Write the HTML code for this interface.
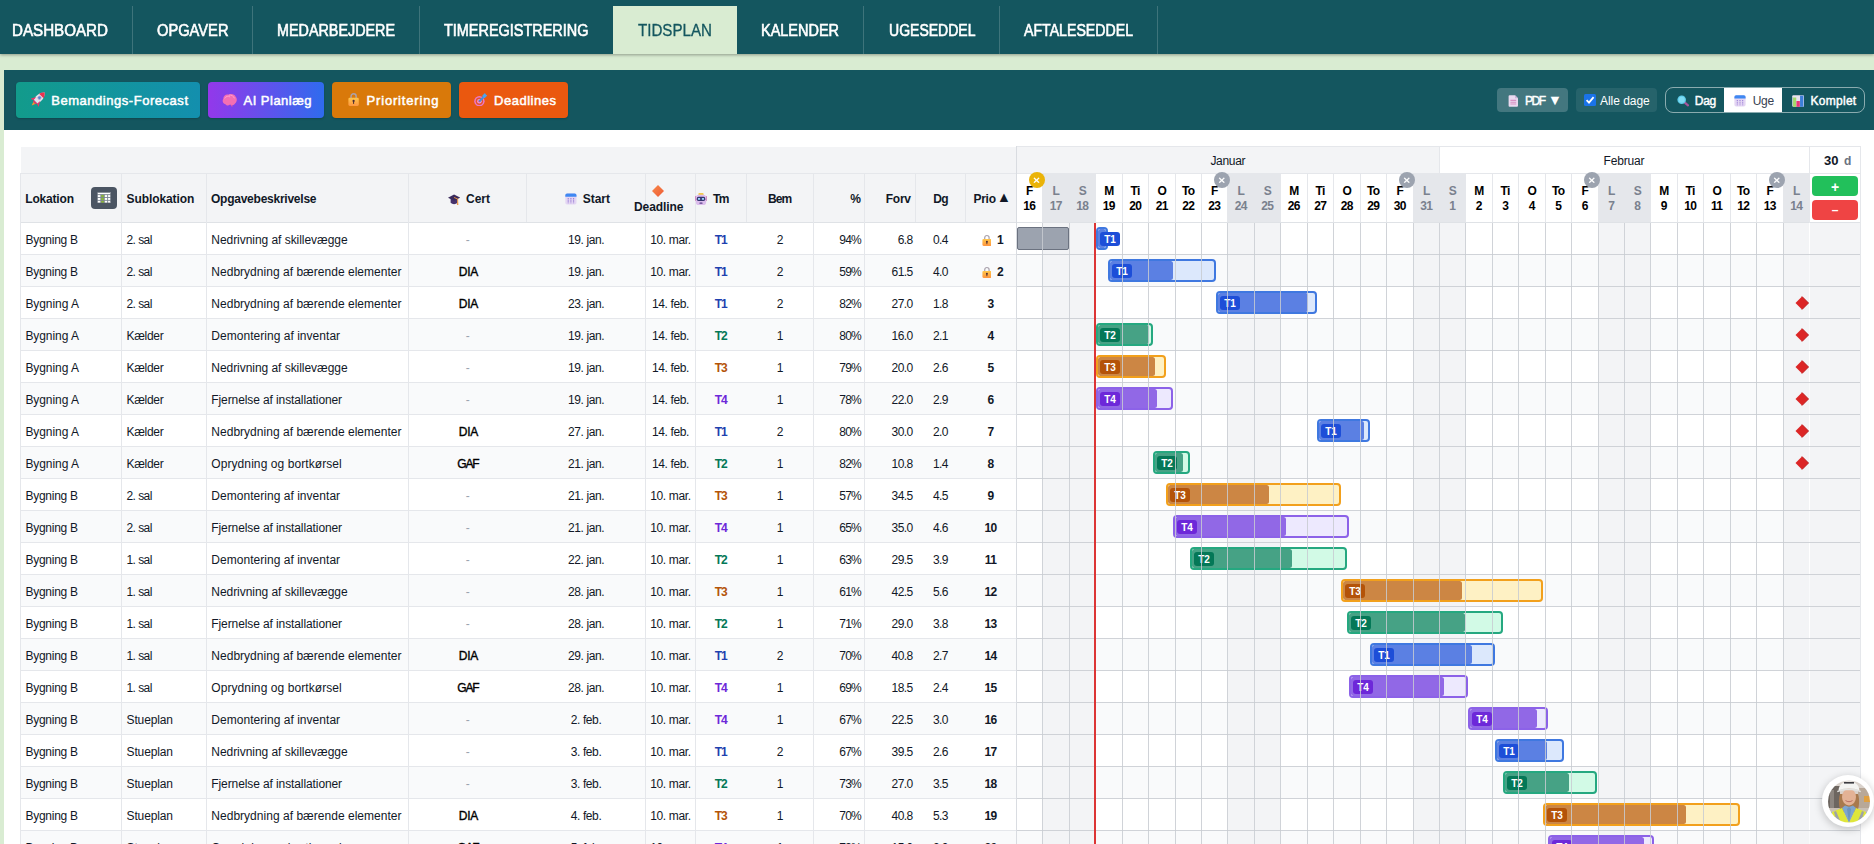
<!DOCTYPE html>
<html lang="da"><head><meta charset="utf-8"><title>Tidsplan</title>
<style>
html,body{margin:0;padding:0}
body{width:1874px;height:844px;overflow:hidden;position:relative;background:#fff;font-family:"Liberation Sans", sans-serif;color:#111827}
#p{position:absolute;left:0;top:0;width:1874px;height:844px;overflow:hidden}
#p div,#p svg,#p span.t{position:absolute}
#p div{box-sizing:border-box}
span.t{white-space:nowrap}
</style></head>
<body><div id="p">
<div style="left:0px;top:0px;width:1874px;height:844px;background:#fff;"></div>
<div style="left:0px;top:54px;width:1874px;height:790px;background:#d9ecd2;"></div>
<div style="left:4px;top:130px;width:1870px;height:714px;background:#fff;"></div>
<div style="left:0px;top:0px;width:1874px;height:54px;background:#14565f;box-shadow:0 1px 3px rgba(0,0,0,.35);z-index:3"></div>
<div style="left:613px;top:6px;width:124px;height:48px;background:#d9ecd2;z-index:4"></div>
<div style="left:132px;top:6px;width:1px;height:48px;background:rgba(255,255,255,.18);z-index:4"></div>
<div style="left:252px;top:6px;width:1px;height:48px;background:rgba(255,255,255,.18);z-index:4"></div>
<div style="left:419px;top:6px;width:1px;height:48px;background:rgba(255,255,255,.18);z-index:4"></div>
<div style="left:863px;top:6px;width:1px;height:48px;background:rgba(255,255,255,.18);z-index:4"></div>
<div style="left:999px;top:6px;width:1px;height:48px;background:rgba(255,255,255,.18);z-index:4"></div>
<div style="left:1157px;top:6px;width:1px;height:48px;background:rgba(255,255,255,.18);z-index:4"></div>
<div style="left:4px;top:70px;width:1870px;height:60px;background:#14565f;"></div>
<div style="left:16px;top:82px;width:184px;height:36px;background:linear-gradient(90deg,#129b8b,#138fae);border-radius:4px;box-shadow:0 1px 2px rgba(0,0,0,.2)"></div>
<div style="left:208px;top:82px;width:116px;height:36px;background:linear-gradient(90deg,#9338ea,#2f6bee);border-radius:4px;box-shadow:0 1px 2px rgba(0,0,0,.2)"></div>
<div style="left:332px;top:82px;width:119px;height:36px;background:#d9790a;border-radius:4px;box-shadow:0 1px 2px rgba(0,0,0,.2)"></div>
<div style="left:459px;top:82px;width:109px;height:36px;background:#ea580f;border-radius:4px;box-shadow:0 1px 2px rgba(0,0,0,.2)"></div>
<div style="left:1497px;top:88px;width:71px;height:24px;background:rgba(255,255,255,.2);border-radius:4px"></div>
<div style="left:1576px;top:88px;width:81px;height:24px;background:rgba(255,255,255,.08);border-radius:4px"></div>
<div style="left:1584px;top:94px;width:12px;height:12px;background:#1a73e8;border-radius:1.5px"><svg width="12" height="12" viewBox="0 0 12 12" style="left:0;top:0"><path d="M2.6 6.2 5 8.6 9.6 3.2" fill="none" stroke="#fff" stroke-width="1.8"/></svg></div>
<div style="left:1665px;top:87px;width:200px;height:26px;background:transparent;border:1px solid rgba(255,255,255,.5);border-radius:8px;overflow:hidden"><div style="left:58px;top:0;width:58px;height:24px;background:#fff"></div></div>
<div style="left:21px;top:147px;width:996px;height:76px;background:#f3f4f6;"></div>
<div style="left:1016px;top:146px;width:423px;height:27px;background:#f3f4f6;"></div>
<div style="left:1439px;top:146px;width:422px;height:27px;background:#fff;"></div>
<div style="left:1016px;top:173px;width:794px;height:50px;background:#fff;"></div>
<div style="left:21px;top:255px;width:1840px;height:31px;background:#f9fafb;"></div>
<div style="left:21px;top:319px;width:1840px;height:31px;background:#f9fafb;"></div>
<div style="left:21px;top:383px;width:1840px;height:31px;background:#f9fafb;"></div>
<div style="left:21px;top:447px;width:1840px;height:31px;background:#f9fafb;"></div>
<div style="left:21px;top:511px;width:1840px;height:31px;background:#f9fafb;"></div>
<div style="left:21px;top:575px;width:1840px;height:31px;background:#f9fafb;"></div>
<div style="left:21px;top:639px;width:1840px;height:31px;background:#f9fafb;"></div>
<div style="left:21px;top:703px;width:1840px;height:31px;background:#f9fafb;"></div>
<div style="left:21px;top:767px;width:1840px;height:31px;background:#f9fafb;"></div>
<div style="left:21px;top:831px;width:1840px;height:31px;background:#f9fafb;"></div>
<div style="left:1043px;top:174px;width:27px;height:48px;background:#e5e7eb;"></div>
<div style="left:1043px;top:223px;width:26px;height:622px;background:#f3f4f6;"></div>
<div style="left:1070px;top:174px;width:26px;height:48px;background:#e5e7eb;"></div>
<div style="left:1070px;top:223px;width:25px;height:622px;background:#f3f4f6;"></div>
<div style="left:1228px;top:174px;width:27px;height:48px;background:#e5e7eb;"></div>
<div style="left:1228px;top:223px;width:26px;height:622px;background:#f3f4f6;"></div>
<div style="left:1255px;top:174px;width:26px;height:48px;background:#e5e7eb;"></div>
<div style="left:1255px;top:223px;width:25px;height:622px;background:#f3f4f6;"></div>
<div style="left:1414px;top:174px;width:26px;height:48px;background:#e5e7eb;"></div>
<div style="left:1414px;top:223px;width:25px;height:622px;background:#f3f4f6;"></div>
<div style="left:1440px;top:174px;width:26px;height:48px;background:#e5e7eb;"></div>
<div style="left:1440px;top:223px;width:25px;height:622px;background:#f3f4f6;"></div>
<div style="left:1599px;top:174px;width:26px;height:48px;background:#e5e7eb;"></div>
<div style="left:1599px;top:223px;width:25px;height:622px;background:#f3f4f6;"></div>
<div style="left:1625px;top:174px;width:26px;height:48px;background:#e5e7eb;"></div>
<div style="left:1625px;top:223px;width:25px;height:622px;background:#f3f4f6;"></div>
<div style="left:1784px;top:174px;width:26px;height:48px;background:#e5e7eb;"></div>
<div style="left:1784px;top:223px;width:25px;height:622px;background:#f3f4f6;"></div>
<div style="left:1810px;top:223px;width:50px;height:622px;background:#f3f4f6;"></div>
<div style="left:1016px;top:146px;width:845px;height:1px;background:#e5e7eb;"></div>
<div style="left:20px;top:173px;width:997px;height:1px;background:#e5e7eb;"></div>
<div style="left:1016px;top:173px;width:845px;height:1px;background:#e5e7eb;"></div>
<div style="left:20px;top:222px;width:1841px;height:1px;background:#dfe2e6;"></div>
<div style="left:20px;top:173px;width:1px;height:673px;background:#e5e7eb;"></div>
<div style="left:1860px;top:146px;width:1px;height:700px;background:#e5e7eb;"></div>
<div style="left:20px;top:254px;width:997px;height:1px;background:#e5e7eb;"></div>
<div style="left:20px;top:286px;width:997px;height:1px;background:#e5e7eb;"></div>
<div style="left:20px;top:318px;width:997px;height:1px;background:#e5e7eb;"></div>
<div style="left:20px;top:350px;width:997px;height:1px;background:#e5e7eb;"></div>
<div style="left:20px;top:382px;width:997px;height:1px;background:#e5e7eb;"></div>
<div style="left:20px;top:414px;width:997px;height:1px;background:#e5e7eb;"></div>
<div style="left:20px;top:446px;width:997px;height:1px;background:#e5e7eb;"></div>
<div style="left:20px;top:478px;width:997px;height:1px;background:#e5e7eb;"></div>
<div style="left:20px;top:510px;width:997px;height:1px;background:#e5e7eb;"></div>
<div style="left:20px;top:542px;width:997px;height:1px;background:#e5e7eb;"></div>
<div style="left:20px;top:574px;width:997px;height:1px;background:#e5e7eb;"></div>
<div style="left:20px;top:606px;width:997px;height:1px;background:#e5e7eb;"></div>
<div style="left:20px;top:638px;width:997px;height:1px;background:#e5e7eb;"></div>
<div style="left:20px;top:670px;width:997px;height:1px;background:#e5e7eb;"></div>
<div style="left:20px;top:702px;width:997px;height:1px;background:#e5e7eb;"></div>
<div style="left:20px;top:734px;width:997px;height:1px;background:#e5e7eb;"></div>
<div style="left:20px;top:766px;width:997px;height:1px;background:#e5e7eb;"></div>
<div style="left:20px;top:798px;width:997px;height:1px;background:#e5e7eb;"></div>
<div style="left:20px;top:830px;width:997px;height:1px;background:#e5e7eb;"></div>
<div style="left:20px;top:862px;width:997px;height:1px;background:#e5e7eb;"></div>
<div style="left:121px;top:174px;width:1px;height:672px;background:#e5e7eb;"></div>
<div style="left:206px;top:174px;width:1px;height:672px;background:#e5e7eb;"></div>
<div style="left:408px;top:174px;width:1px;height:672px;background:#e5e7eb;"></div>
<div style="left:526px;top:174px;width:1px;height:48px;background:#e5e7eb;"></div>
<div style="left:645px;top:174px;width:1px;height:672px;background:#e5e7eb;"></div>
<div style="left:695px;top:174px;width:1px;height:672px;background:#e5e7eb;"></div>
<div style="left:746px;top:174px;width:1px;height:48px;background:#e5e7eb;"></div>
<div style="left:813px;top:174px;width:1px;height:672px;background:#e5e7eb;"></div>
<div style="left:864px;top:174px;width:1px;height:672px;background:#e5e7eb;"></div>
<div style="left:915px;top:174px;width:1px;height:48px;background:#e5e7eb;"></div>
<div style="left:965px;top:174px;width:1px;height:48px;background:#e5e7eb;"></div>
<div style="left:1016px;top:146px;width:1px;height:700px;background:#d9dce1;"></div>
<div style="left:1439px;top:146px;width:1px;height:28px;background:#e5e7eb;"></div>
<div style="left:1809px;top:146px;width:1px;height:77px;background:#e5e7eb;"></div>
<div style="left:91px;top:187px;width:26px;height:22px;background:#4b5563;border-radius:4px"></div>
<div style="left:1017px;top:227px;width:52px;height:23px;background:#9ca3af;border:1px solid #6b7280;border-radius:2px"></div>
<div style="left:1096px;top:227px;width:12px;height:23px;background:#dce8fc;border:2px solid #3f78e0;border-radius:4px;overflow:hidden"><div style="left:0;top:0;width:8px;height:19px;background:#5b80e3;border-radius:2.5px"></div></div>
<div style="left:1100px;top:232px;width:20px;height:14px;background:#1d4ed8;border-radius:3px"></div>
<div style="left:1108px;top:259px;width:108px;height:23px;background:#dce8fc;border:2px solid #3f78e0;border-radius:4px;overflow:hidden"><div style="left:0;top:0;width:63px;height:19px;background:#5b80e3;border-radius:2.5px"></div></div>
<div style="left:1112px;top:264px;width:20px;height:14px;background:#1d4ed8;border-radius:3px"></div>
<div style="left:1216px;top:291px;width:101px;height:23px;background:#dce8fc;border:2px solid #3f78e0;border-radius:4px;overflow:hidden"><div style="left:0;top:0;width:90px;height:19px;background:#5b80e3;border-radius:2.5px"></div></div>
<div style="left:1220px;top:296px;width:20px;height:14px;background:#1d4ed8;border-radius:3px"></div>
<div style="left:1096px;top:323px;width:57px;height:23px;background:#d2fae6;border:2px solid #25a880;border-radius:4px;overflow:hidden"><div style="left:0;top:0;width:51px;height:19px;background:#46a285;border-radius:2.5px"></div></div>
<div style="left:1100px;top:328px;width:20px;height:14px;background:#047857;border-radius:3px"></div>
<div style="left:1096px;top:355px;width:70px;height:23px;background:#fef1c4;border:2px solid #f2a01c;border-radius:4px;overflow:hidden"><div style="left:0;top:0;width:57px;height:19px;background:#cc8644;border-radius:2.5px"></div></div>
<div style="left:1100px;top:360px;width:20px;height:14px;background:#b45309;border-radius:3px"></div>
<div style="left:1096px;top:387px;width:77px;height:23px;background:#ede9fe;border:2px solid #8c62e8;border-radius:4px;overflow:hidden"><div style="left:0;top:0;width:59px;height:19px;background:#9168e6;border-radius:2.5px"></div></div>
<div style="left:1100px;top:392px;width:20px;height:14px;background:#6d28d9;border-radius:3px"></div>
<div style="left:1317px;top:419px;width:53px;height:23px;background:#dce8fc;border:2px solid #3f78e0;border-radius:4px;overflow:hidden"><div style="left:0;top:0;width:45px;height:19px;background:#5b80e3;border-radius:2.5px"></div></div>
<div style="left:1321px;top:424px;width:20px;height:14px;background:#1d4ed8;border-radius:3px"></div>
<div style="left:1153px;top:451px;width:37px;height:23px;background:#d2fae6;border:2px solid #25a880;border-radius:4px;overflow:hidden"><div style="left:0;top:0;width:28px;height:19px;background:#46a285;border-radius:2.5px"></div></div>
<div style="left:1157px;top:456px;width:20px;height:14px;background:#047857;border-radius:3px"></div>
<div style="left:1166px;top:483px;width:175px;height:23px;background:#fef1c4;border:2px solid #f2a01c;border-radius:4px;overflow:hidden"><div style="left:0;top:0;width:101px;height:19px;background:#cc8644;border-radius:2.5px"></div></div>
<div style="left:1170px;top:488px;width:20px;height:14px;background:#b45309;border-radius:3px"></div>
<div style="left:1173px;top:515px;width:176px;height:23px;background:#ede9fe;border:2px solid #8c62e8;border-radius:4px;overflow:hidden"><div style="left:0;top:0;width:110.5px;height:19px;background:#9168e6;border-radius:2.5px"></div></div>
<div style="left:1177px;top:520px;width:20px;height:14px;background:#6d28d9;border-radius:3px"></div>
<div style="left:1190px;top:547px;width:157px;height:23px;background:#d2fae6;border:2px solid #25a880;border-radius:4px;overflow:hidden"><div style="left:0;top:0;width:100px;height:19px;background:#46a285;border-radius:2.5px"></div></div>
<div style="left:1194px;top:552px;width:20px;height:14px;background:#047857;border-radius:3px"></div>
<div style="left:1341px;top:579px;width:202px;height:23px;background:#fef1c4;border:2px solid #f2a01c;border-radius:4px;overflow:hidden"><div style="left:0;top:0;width:119px;height:19px;background:#cc8644;border-radius:2.5px"></div></div>
<div style="left:1345px;top:584px;width:20px;height:14px;background:#b45309;border-radius:3px"></div>
<div style="left:1347px;top:611px;width:156px;height:23px;background:#d2fae6;border:2px solid #25a880;border-radius:4px;overflow:hidden"><div style="left:0;top:0;width:116px;height:19px;background:#46a285;border-radius:2.5px"></div></div>
<div style="left:1351px;top:616px;width:20px;height:14px;background:#047857;border-radius:3px"></div>
<div style="left:1370px;top:643px;width:125px;height:23px;background:#dce8fc;border:2px solid #3f78e0;border-radius:4px;overflow:hidden"><div style="left:0;top:0;width:99.5px;height:19px;background:#5b80e3;border-radius:2.5px"></div></div>
<div style="left:1374px;top:648px;width:20px;height:14px;background:#1d4ed8;border-radius:3px"></div>
<div style="left:1349px;top:675px;width:119px;height:23px;background:#ede9fe;border:2px solid #8c62e8;border-radius:4px;overflow:hidden"><div style="left:0;top:0;width:92.5px;height:19px;background:#9168e6;border-radius:2.5px"></div></div>
<div style="left:1353px;top:680px;width:20px;height:14px;background:#6d28d9;border-radius:3px"></div>
<div style="left:1468px;top:707px;width:80px;height:23px;background:#ede9fe;border:2px solid #8c62e8;border-radius:4px;overflow:hidden"><div style="left:0;top:0;width:66.5px;height:19px;background:#9168e6;border-radius:2.5px"></div></div>
<div style="left:1472px;top:712px;width:20px;height:14px;background:#6d28d9;border-radius:3px"></div>
<div style="left:1495px;top:739px;width:69px;height:23px;background:#dce8fc;border:2px solid #3f78e0;border-radius:4px;overflow:hidden"><div style="left:0;top:0;width:49.5px;height:19px;background:#5b80e3;border-radius:2.5px"></div></div>
<div style="left:1499px;top:744px;width:20px;height:14px;background:#1d4ed8;border-radius:3px"></div>
<div style="left:1503px;top:771px;width:94px;height:23px;background:#d2fae6;border:2px solid #25a880;border-radius:4px;overflow:hidden"><div style="left:0;top:0;width:64px;height:19px;background:#46a285;border-radius:2.5px"></div></div>
<div style="left:1507px;top:776px;width:20px;height:14px;background:#047857;border-radius:3px"></div>
<div style="left:1543px;top:803px;width:197px;height:23px;background:#fef1c4;border:2px solid #f2a01c;border-radius:4px;overflow:hidden"><div style="left:0;top:0;width:141px;height:19px;background:#cc8644;border-radius:2.5px"></div></div>
<div style="left:1547px;top:808px;width:20px;height:14px;background:#b45309;border-radius:3px"></div>
<div style="left:1548px;top:835px;width:106px;height:23px;background:#ede9fe;border:2px solid #8c62e8;border-radius:4px;overflow:hidden"><div style="left:0;top:0;width:94px;height:19px;background:#9168e6;border-radius:2.5px"></div></div>
<div style="left:1552px;top:840px;width:20px;height:14px;background:#6d28d9;border-radius:3px"></div>
<svg width="14" height="14" viewBox="-7 -7 14 14" style="left:1795px;top:295.5px"><path d="M0-6.5 6.5 0 0 6.5-6.5 0Z" fill="#dc2626"/><path d="M0 6.5 6.5 0 0-6.5" fill="none" stroke="#b91c1c" stroke-width="1"/></svg>
<svg width="14" height="14" viewBox="-7 -7 14 14" style="left:1795px;top:327.5px"><path d="M0-6.5 6.5 0 0 6.5-6.5 0Z" fill="#dc2626"/><path d="M0 6.5 6.5 0 0-6.5" fill="none" stroke="#b91c1c" stroke-width="1"/></svg>
<svg width="14" height="14" viewBox="-7 -7 14 14" style="left:1795px;top:359.5px"><path d="M0-6.5 6.5 0 0 6.5-6.5 0Z" fill="#dc2626"/><path d="M0 6.5 6.5 0 0-6.5" fill="none" stroke="#b91c1c" stroke-width="1"/></svg>
<svg width="14" height="14" viewBox="-7 -7 14 14" style="left:1795px;top:391.5px"><path d="M0-6.5 6.5 0 0 6.5-6.5 0Z" fill="#dc2626"/><path d="M0 6.5 6.5 0 0-6.5" fill="none" stroke="#b91c1c" stroke-width="1"/></svg>
<svg width="14" height="14" viewBox="-7 -7 14 14" style="left:1795px;top:423.5px"><path d="M0-6.5 6.5 0 0 6.5-6.5 0Z" fill="#dc2626"/><path d="M0 6.5 6.5 0 0-6.5" fill="none" stroke="#b91c1c" stroke-width="1"/></svg>
<svg width="14" height="14" viewBox="-7 -7 14 14" style="left:1795px;top:455.5px"><path d="M0-6.5 6.5 0 0 6.5-6.5 0Z" fill="#dc2626"/><path d="M0 6.5 6.5 0 0-6.5" fill="none" stroke="#b91c1c" stroke-width="1"/></svg>
<svg width="14" height="14.6" viewBox="0 0 14 14.6" style="left:30.6px;top:92px"><g transform="rotate(45 7 7.3)"><path d="M7 -2.200C10.800 1.200 11 6.500 9.800 10.800H4.200C3 6.500 3.200 1.200 7-2.200Z" fill="#e6e1ee"/><path d="M7-2.200C8.700-.6 9.700 1 10.200 2.600H3.800C4.300 1 5.300-.6 7-2.200Z" fill="#e8334f"/><path d="M4.200 7 1.200 12.300 4.500 11.200ZM9.800 7 12.800 12.300 9.500 11.200Z" fill="#ea3568"/><path d="M4.600 10.800h4.800l-.7 1.800H5.300Z" fill="#ea3568"/><path d="M5.600 12.600h2.800L7 16.200Z" fill="#f59a2e"/><circle cx="7" cy="5.200" r="1.700" fill="#5b7fd6" stroke="#b9b2c8" stroke-width=".7"/></g></svg>
<svg width="15" height="13.4" viewBox="0 0 14 12.600" style="left:222.4px;top:93.2px"><path d="M3.2 10.6C.8 10.2-.2 7.2 1.2 5.4 1 2.8 3.6.8 6 1.6 8.2.2 12 .9 12.8 3.6c1.6 1.6 1.4 4.8-.6 6.2-.9 1.9-3.4 2.2-4.7 1 -1.300 1.400-3.300 1.200-4.300-.2Z" fill="#f46fb3"/><path d="M2.4 5.2C3.400 3 6 2.400 7.600 3.800M6.200 2C8.600 1.600 11 2.800 11.600 5" fill="none" stroke="#ff9fd0" stroke-width=".9"/><path d="M8.5 11.3l1.200 1.200" stroke="#e85aa0" stroke-width="1"/></svg>
<svg width="11.2" height="14.4" viewBox="0 0 11 14" style="left:347.9px;top:92.3px"><defs><linearGradient id="lk0" x1="0" y1="0" x2="0" y2="1"><stop offset="0" stop-color="#ffc64a"/><stop offset="1" stop-color="#ff9640"/></linearGradient></defs><path d="M3 6.500V4.200a2.500 2.500 0 0 1 5 0V6.500" fill="none" stroke="#aaa2ad" stroke-width="1.400"/><rect x=".4" y="5.600" width="10.200" height="8" rx="1.300" fill="url(#lk0)"/><circle cx="5.500" cy="8.700" r="1.100" fill="#4a2b33"/><rect x="5" y="9" width="1" height="2.600" fill="#4a2b33"/></svg>
<svg width="13.4" height="13.6" viewBox="0 0 13.400 13.600" style="left:474.1px;top:92.6px"><circle cx="5.400" cy="8.200" r="5.200" fill="#e978c8"/><circle cx="5.400" cy="8.200" r="3.700" fill="#e8532a"/><circle cx="5.400" cy="8.200" r="2.300" fill="#f09ad2"/><circle cx="5.400" cy="8.200" r="1" fill="#d0407a"/><path d="M5.400 8.200 10.200 3.400" stroke="#3f8fe0" stroke-width="2"/><path d="M8.400 2.600 11 0 11.800 1.600 13.400 2.400 10.800 5 8.800 4.600Z" fill="#4aa3ee"/></svg>
<svg width="10.6" height="11.7" viewBox="0 0 10.600 11.700" style="left:1507.7px;top:95.2px"><path d="M.6 1.200a1 1 0 0 1 1-1H7l3 3v7.600a1 1 0 0 1-1 1H1.600a1 1 0 0 1-1-1Z" fill="#ead9ef"/><path d="M7 .2v3h3Z" fill="#cdb3d8"/><path d="M2.400 5.400h5.800M2.400 7.200h5.800M2.400 9h5.800" stroke="#d791c3" stroke-width="1.100"/></svg>
<svg width="12" height="11.2" viewBox="0 0 12 11.200" style="left:1676.9px;top:95.4px"><path d="M7.200 7.200 11 10.400" stroke="#a8559c" stroke-width="2.200" stroke-linecap="round"/><circle cx="4.700" cy="4.700" r="4.300" fill="#5fcdea"/><circle cx="4.700" cy="4.700" r="3" fill="#7fdcf4"/></svg>
<svg width="12" height="11.8" viewBox="0 0 12 12" style="left:1734px;top:94.8px"><rect x=".3" y=".3" width="11.400" height="11.400" rx="1.800" fill="#e4d6f3"/><path d="M.3 2.100A1.800 1.800 0 0 1 2.100.3h7.800a1.800 1.800 0 0 1 1.800 1.800V3.600H.3Z" fill="#3f88f2"/><path d="M3.300 5v5.400M6 5v5.400M8.700 5v5.400" stroke="#9f86d8" stroke-width="1.200" stroke-dasharray="1.400 .9"/></svg>
<svg width="12.3" height="12" viewBox="0 0 12.200 12" style="left:1791.9px;top:94.7px"><rect x=".2" y=".2" width="11.800" height="11.600" rx="1" fill="#e9e2ef"/><rect x="1" y="2.500" width="3.200" height="9.300" fill="#a3d96b"/><rect x="4.400" y="6" width="3.400" height="5.800" fill="#e8357a"/><rect x="8" y=".6" width="3.400" height="11.200" fill="#3d7fd9"/></svg>
<svg width="12.1" height="11.1" viewBox="0 0 12 11" style="left:447.9px;top:193.9px"><path d="M2.600 5v3.800c1.800 1.800 5 1.800 6.800 0V5Z" fill="#46326c"/><path d="M6 .4 12 3.600 6 6.800 0 3.600Z" fill="#3a2a5c"/><path d="M6 3.400 9.600 5v3.500" fill="none" stroke="#f0963a" stroke-width=".9"/><path d="M9.100 8.200h1l.2 2.600H8.900Z" fill="#f0963a"/></svg>
<svg width="11.8" height="12" viewBox="0 0 12 12" style="left:564.8px;top:192.5px"><rect x=".3" y=".3" width="11.400" height="11.400" rx="1.800" fill="#e4d6f3"/><path d="M.3 2.100A1.800 1.800 0 0 1 2.100.3h7.800a1.800 1.800 0 0 1 1.800 1.800V3.600H.3Z" fill="#3f88f2"/><path d="M3.300 5v5.400M6 5v5.400M8.700 5v5.400" stroke="#9f86d8" stroke-width="1.200" stroke-dasharray="1.400 .9"/></svg>
<svg width="12" height="12" viewBox="0 0 12 12" style="left:652.2px;top:185px"><defs><linearGradient id="dm" x1="0" y1="0" x2="1" y2="1"><stop offset="0" stop-color="#f7894a"/><stop offset="1" stop-color="#ee5a35"/></linearGradient></defs><path d="M6 0 12 6 6 12 0 6Z" fill="url(#dm)"/></svg>
<svg width="12" height="12.3" viewBox="0 0 12 12.2" style="left:695px;top:192.5px"><rect x="3.400" y="0" width="5.200" height="2.600" rx=".9" fill="#f2c94c"/><rect x="0" y="3" width="1.500" height="5" rx=".7" fill="#c97fb8"/><rect x="10.500" y="3" width="1.500" height="5" rx=".7" fill="#c97fb8"/><rect x=".8" y="1.600" width="10.400" height="10.600" rx="3.200" fill="#dcbdec"/><rect x="1.700" y="3.800" width="8.600" height="4.200" rx="1.800" fill="#34346e"/><rect x="2.900" y="5" width="2.300" height="1.700" rx=".6" fill="#9fdcff"/><rect x="6.800" y="5" width="2.300" height="1.700" rx=".6" fill="#9fdcff"/><rect x="4.400" y="9.500" width="3.200" height="1.100" rx=".4" fill="#5a3f8a"/></svg>
<svg width="14" height="11.4" viewBox="0 0 14 11.400" style="left:97px;top:191.8px"><rect width="14" height="11.400" fill="#fff"/><rect x="4" y="2.600" width="3.200" height="8.800" fill="#8ab833"/><path d="M0 2.600h14M0 5.500h14M0 8.400h14M3.800 2.600v8.800M7.300 2.600v8.800M10.600 2.600v8.800" stroke="#7b8591" stroke-width=".9"/><rect x=".4" y=".4" width="13.200" height="10.600" fill="none" stroke="#6b7480" stroke-width=".8"/></svg>
<svg width="9.8" height="12.3" viewBox="0 0 11 14" style="left:981.6px;top:233.6px"><defs><linearGradient id="lk1" x1="0" y1="0" x2="0" y2="1"><stop offset="0" stop-color="#ffc64a"/><stop offset="1" stop-color="#ff9640"/></linearGradient></defs><path d="M3 6.500V4.200a2.500 2.500 0 0 1 5 0V6.500" fill="none" stroke="#aaa2ad" stroke-width="1.400"/><rect x=".4" y="5.600" width="10.200" height="8" rx="1.300" fill="url(#lk1)"/><circle cx="5.500" cy="8.700" r="1.100" fill="#4a2b33"/><rect x="5" y="9" width="1" height="2.600" fill="#4a2b33"/></svg>
<svg width="9.8" height="12.3" viewBox="0 0 11 14" style="left:981.6px;top:265.6px"><defs><linearGradient id="lk2" x1="0" y1="0" x2="0" y2="1"><stop offset="0" stop-color="#ffc64a"/><stop offset="1" stop-color="#ff9640"/></linearGradient></defs><path d="M3 6.500V4.200a2.500 2.500 0 0 1 5 0V6.500" fill="none" stroke="#aaa2ad" stroke-width="1.400"/><rect x=".4" y="5.600" width="10.200" height="8" rx="1.300" fill="url(#lk2)"/><circle cx="5.500" cy="8.700" r="1.100" fill="#4a2b33"/><rect x="5" y="9" width="1" height="2.600" fill="#4a2b33"/></svg>
<span class="t" style="left:12.00px;top:23px;font-size:16px;line-height:16px;color:#fff;transform:scaleX(0.9471);transform-origin:0 0;z-index:5;-webkit-text-stroke:.6px #fff;">DASHBOARD</span>
<span class="t" style="left:157.00px;top:23px;font-size:16px;line-height:16px;color:#fff;transform:scaleX(0.9172);transform-origin:0 0;z-index:5;-webkit-text-stroke:.6px #fff;">OPGAVER</span>
<span class="t" style="left:277.00px;top:23px;font-size:16px;line-height:16px;color:#fff;transform:scaleX(0.8968);transform-origin:0 0;z-index:5;-webkit-text-stroke:.6px #fff;">MEDARBEJDERE</span>
<span class="t" style="left:444.00px;top:23px;font-size:16px;line-height:16px;color:#fff;transform:scaleX(0.9030);transform-origin:0 0;z-index:5;-webkit-text-stroke:.6px #fff;">TIMEREGISTRERING</span>
<span class="t" style="left:637.50px;top:23px;font-size:16px;line-height:16px;color:#14565f;transform:scaleX(0.9457);transform-origin:0 0;z-index:5;-webkit-text-stroke:.3px #14565f;">TIDSPLAN</span>
<span class="t" style="left:761.00px;top:23px;font-size:16px;line-height:16px;color:#fff;transform:scaleX(0.9043);transform-origin:0 0;z-index:5;-webkit-text-stroke:.6px #fff;">KALENDER</span>
<span class="t" style="left:888.50px;top:23px;font-size:16px;line-height:16px;color:#fff;transform:scaleX(0.8764);transform-origin:0 0;z-index:5;-webkit-text-stroke:.6px #fff;">UGESEDDEL</span>
<span class="t" style="left:1024.00px;top:23px;font-size:16px;line-height:16px;color:#fff;transform:scaleX(0.8840);transform-origin:0 0;z-index:5;-webkit-text-stroke:.6px #fff;">AFTALESEDDEL</span>
<span class="t" style="left:51.25px;top:94px;font-size:13px;line-height:13px;color:#fff;letter-spacing:0.532px;-webkit-text-stroke:.5px #fff;">Bemandings-Forecast</span>
<span class="t" style="left:243.50px;top:94px;font-size:13px;line-height:13px;color:#fff;letter-spacing:0.490px;-webkit-text-stroke:.5px #fff;">AI Planlæg</span>
<span class="t" style="left:366.50px;top:94px;font-size:13px;line-height:13px;color:#fff;letter-spacing:0.831px;-webkit-text-stroke:.5px #fff;">Prioritering</span>
<span class="t" style="left:494.00px;top:94px;font-size:13px;line-height:13px;color:#fff;letter-spacing:0.521px;-webkit-text-stroke:.5px #fff;">Deadlines</span>
<span class="t" style="left:1525.00px;top:95px;font-size:12px;line-height:12px;color:#fff;letter-spacing:-1.400px;-webkit-text-stroke:.45px #fff;">PDF</span>
<span class="t" style="left:1547.80px;top:93px;font-size:14.5px;line-height:14.5px;color:#fff;font-family:"DejaVu Sans",sans-serif;">▼</span>
<span class="t" style="left:1600.00px;top:95px;font-size:12px;line-height:12px;color:#fff;letter-spacing:-0.043px;">Alle dage</span>
<span class="t" style="left:1694.80px;top:95px;font-size:12px;line-height:12px;color:#fff;letter-spacing:-0.308px;-webkit-text-stroke:.45px #fff;">Dag</span>
<span class="t" style="left:1752.70px;top:95px;font-size:12px;line-height:12px;color:#374151;letter-spacing:-0.258px;">Uge</span>
<span class="t" style="left:1810.50px;top:95px;font-size:12px;line-height:12px;color:#fff;letter-spacing:0.278px;-webkit-text-stroke:.45px #fff;">Komplet</span>
<span class="t" style="left:25.30px;top:193px;font-size:12px;line-height:12px;font-weight:700;letter-spacing:-0.186px;">Lokation</span>
<span class="t" style="left:126.60px;top:193px;font-size:12px;line-height:12px;font-weight:700;letter-spacing:-0.097px;">Sublokation</span>
<span class="t" style="left:211.00px;top:193px;font-size:12px;line-height:12px;font-weight:700;letter-spacing:-0.244px;">Opgavebeskrivelse</span>
<span class="t" style="left:466.00px;top:193px;font-size:12px;line-height:12px;font-weight:700;letter-spacing:-0.005px;">Cert</span>
<span class="t" style="left:582.70px;top:193px;font-size:12px;line-height:12px;font-weight:700;letter-spacing:-0.011px;">Start</span>
<span class="t" style="left:634.00px;top:201px;font-size:12px;line-height:12px;font-weight:700;letter-spacing:-0.102px;">Deadline</span>
<span class="t" style="left:713.00px;top:193px;font-size:12px;line-height:12px;font-weight:700;letter-spacing:-1.700px;">Tm</span>
<span class="t" style="left:768.00px;top:193px;font-size:12px;line-height:12px;font-weight:700;letter-spacing:-0.858px;">Bem</span>
<span class="t" style="left:850.30px;top:193px;font-size:12px;line-height:12px;font-weight:700;">%</span>
<span class="t" style="left:885.80px;top:193px;font-size:12px;line-height:12px;font-weight:700;letter-spacing:-0.272px;">Forv</span>
<span class="t" style="left:933.30px;top:193px;font-size:12px;line-height:12px;font-weight:700;letter-spacing:-0.600px;">Dg</span>
<span class="t" style="left:973.50px;top:193px;font-size:12px;line-height:12px;font-weight:700;letter-spacing:-0.281px;">Prio</span>
<span class="t" style="left:996.80px;top:190px;font-size:14.5px;line-height:14.5px;font-family:"DejaVu Sans",sans-serif;">▲</span>
<span class="t" style="left:1210.40px;top:155px;font-size:12px;line-height:12px;letter-spacing:-0.301px;">Januar</span>
<span class="t" style="left:1603.50px;top:155px;font-size:12px;line-height:12px;letter-spacing:-0.172px;">Februar</span>
<span class="t" style="left:1824.00px;top:154px;font-size:13px;line-height:13px;font-weight:700;letter-spacing:0.031px;">30</span>
<span class="t" style="left:1844.00px;top:155px;font-size:12px;line-height:12px;font-weight:700;color:#6b7280;">d</span>
<span class="t" style="left:1026.01px;top:185px;font-size:12px;line-height:12px;font-weight:700;color:#000;">F</span>
<span class="t" style="left:1023.15px;top:200px;font-size:12px;line-height:12px;font-weight:700;color:#000;letter-spacing:-0.668px;">16</span>
<span class="t" style="left:1052.51px;top:185px;font-size:12px;line-height:12px;font-weight:700;color:#7a818e;">L</span>
<span class="t" style="left:1049.65px;top:200px;font-size:12px;line-height:12px;font-weight:700;color:#7a818e;letter-spacing:-0.668px;">17</span>
<span class="t" style="left:1078.69px;top:185px;font-size:12px;line-height:12px;font-weight:700;color:#7a818e;">S</span>
<span class="t" style="left:1076.15px;top:200px;font-size:12px;line-height:12px;font-weight:700;color:#7a818e;letter-spacing:-0.668px;">18</span>
<span class="t" style="left:1104.25px;top:185px;font-size:12px;line-height:12px;font-weight:700;color:#000;">M</span>
<span class="t" style="left:1102.65px;top:200px;font-size:12px;line-height:12px;font-weight:700;color:#000;letter-spacing:-0.668px;">19</span>
<span class="t" style="left:1130.53px;top:185px;font-size:12px;line-height:12px;font-weight:700;color:#000;letter-spacing:-0.523px;">Ti</span>
<span class="t" style="left:1129.15px;top:200px;font-size:12px;line-height:12px;font-weight:700;color:#000;letter-spacing:-0.668px;">20</span>
<span class="t" style="left:1157.56px;top:185px;font-size:12px;line-height:12px;font-weight:700;color:#000;">O</span>
<span class="t" style="left:1155.65px;top:200px;font-size:12px;line-height:12px;font-weight:700;color:#000;letter-spacing:-0.668px;">21</span>
<span class="t" style="left:1181.95px;top:185px;font-size:12px;line-height:12px;font-weight:700;color:#000;letter-spacing:-0.689px;">To</span>
<span class="t" style="left:1182.15px;top:200px;font-size:12px;line-height:12px;font-weight:700;color:#000;letter-spacing:-0.668px;">22</span>
<span class="t" style="left:1211.01px;top:185px;font-size:12px;line-height:12px;font-weight:700;color:#000;">F</span>
<span class="t" style="left:1208.15px;top:200px;font-size:12px;line-height:12px;font-weight:700;color:#000;letter-spacing:-0.668px;">23</span>
<span class="t" style="left:1237.51px;top:185px;font-size:12px;line-height:12px;font-weight:700;color:#7a818e;">L</span>
<span class="t" style="left:1234.65px;top:200px;font-size:12px;line-height:12px;font-weight:700;color:#7a818e;letter-spacing:-0.668px;">24</span>
<span class="t" style="left:1263.69px;top:185px;font-size:12px;line-height:12px;font-weight:700;color:#7a818e;">S</span>
<span class="t" style="left:1261.15px;top:200px;font-size:12px;line-height:12px;font-weight:700;color:#7a818e;letter-spacing:-0.668px;">25</span>
<span class="t" style="left:1289.25px;top:185px;font-size:12px;line-height:12px;font-weight:700;color:#000;">M</span>
<span class="t" style="left:1287.65px;top:200px;font-size:12px;line-height:12px;font-weight:700;color:#000;letter-spacing:-0.668px;">26</span>
<span class="t" style="left:1315.53px;top:185px;font-size:12px;line-height:12px;font-weight:700;color:#000;letter-spacing:-0.523px;">Ti</span>
<span class="t" style="left:1314.15px;top:200px;font-size:12px;line-height:12px;font-weight:700;color:#000;letter-spacing:-0.668px;">27</span>
<span class="t" style="left:1342.56px;top:185px;font-size:12px;line-height:12px;font-weight:700;color:#000;">O</span>
<span class="t" style="left:1340.65px;top:200px;font-size:12px;line-height:12px;font-weight:700;color:#000;letter-spacing:-0.668px;">28</span>
<span class="t" style="left:1366.95px;top:185px;font-size:12px;line-height:12px;font-weight:700;color:#000;letter-spacing:-0.689px;">To</span>
<span class="t" style="left:1367.15px;top:200px;font-size:12px;line-height:12px;font-weight:700;color:#000;letter-spacing:-0.668px;">29</span>
<span class="t" style="left:1396.51px;top:185px;font-size:12px;line-height:12px;font-weight:700;color:#000;">F</span>
<span class="t" style="left:1393.65px;top:200px;font-size:12px;line-height:12px;font-weight:700;color:#000;letter-spacing:-0.668px;">30</span>
<span class="t" style="left:1423.01px;top:185px;font-size:12px;line-height:12px;font-weight:700;color:#7a818e;">L</span>
<span class="t" style="left:1420.15px;top:200px;font-size:12px;line-height:12px;font-weight:700;color:#7a818e;letter-spacing:-0.668px;">31</span>
<span class="t" style="left:1448.69px;top:185px;font-size:12px;line-height:12px;font-weight:700;color:#7a818e;">S</span>
<span class="t" style="left:1449.32px;top:200px;font-size:12px;line-height:12px;font-weight:700;color:#7a818e;">1</span>
<span class="t" style="left:1474.25px;top:185px;font-size:12px;line-height:12px;font-weight:700;color:#000;">M</span>
<span class="t" style="left:1475.82px;top:200px;font-size:12px;line-height:12px;font-weight:700;color:#000;">2</span>
<span class="t" style="left:1500.53px;top:185px;font-size:12px;line-height:12px;font-weight:700;color:#000;letter-spacing:-0.523px;">Ti</span>
<span class="t" style="left:1502.32px;top:200px;font-size:12px;line-height:12px;font-weight:700;color:#000;">3</span>
<span class="t" style="left:1527.56px;top:185px;font-size:12px;line-height:12px;font-weight:700;color:#000;">O</span>
<span class="t" style="left:1528.82px;top:200px;font-size:12px;line-height:12px;font-weight:700;color:#000;">4</span>
<span class="t" style="left:1551.95px;top:185px;font-size:12px;line-height:12px;font-weight:700;color:#000;letter-spacing:-0.689px;">To</span>
<span class="t" style="left:1555.32px;top:200px;font-size:12px;line-height:12px;font-weight:700;color:#000;">5</span>
<span class="t" style="left:1581.51px;top:185px;font-size:12px;line-height:12px;font-weight:700;color:#000;">F</span>
<span class="t" style="left:1581.82px;top:200px;font-size:12px;line-height:12px;font-weight:700;color:#000;">6</span>
<span class="t" style="left:1608.01px;top:185px;font-size:12px;line-height:12px;font-weight:700;color:#7a818e;">L</span>
<span class="t" style="left:1608.32px;top:200px;font-size:12px;line-height:12px;font-weight:700;color:#7a818e;">7</span>
<span class="t" style="left:1633.69px;top:185px;font-size:12px;line-height:12px;font-weight:700;color:#7a818e;">S</span>
<span class="t" style="left:1634.32px;top:200px;font-size:12px;line-height:12px;font-weight:700;color:#7a818e;">8</span>
<span class="t" style="left:1659.25px;top:185px;font-size:12px;line-height:12px;font-weight:700;color:#000;">M</span>
<span class="t" style="left:1660.82px;top:200px;font-size:12px;line-height:12px;font-weight:700;color:#000;">9</span>
<span class="t" style="left:1685.53px;top:185px;font-size:12px;line-height:12px;font-weight:700;color:#000;letter-spacing:-0.523px;">Ti</span>
<span class="t" style="left:1684.15px;top:200px;font-size:12px;line-height:12px;font-weight:700;color:#000;letter-spacing:-0.668px;">10</span>
<span class="t" style="left:1712.56px;top:185px;font-size:12px;line-height:12px;font-weight:700;color:#000;">O</span>
<span class="t" style="left:1710.97px;top:200px;font-size:12px;line-height:12px;font-weight:700;color:#000;letter-spacing:-0.634px;">11</span>
<span class="t" style="left:1736.95px;top:185px;font-size:12px;line-height:12px;font-weight:700;color:#000;letter-spacing:-0.689px;">To</span>
<span class="t" style="left:1737.15px;top:200px;font-size:12px;line-height:12px;font-weight:700;color:#000;letter-spacing:-0.668px;">12</span>
<span class="t" style="left:1766.51px;top:185px;font-size:12px;line-height:12px;font-weight:700;color:#000;">F</span>
<span class="t" style="left:1763.65px;top:200px;font-size:12px;line-height:12px;font-weight:700;color:#000;letter-spacing:-0.668px;">13</span>
<span class="t" style="left:1793.01px;top:185px;font-size:12px;line-height:12px;font-weight:700;color:#7a818e;">L</span>
<span class="t" style="left:1790.15px;top:200px;font-size:12px;line-height:12px;font-weight:700;color:#7a818e;letter-spacing:-0.668px;">14</span>
<span class="t" style="left:25.40px;top:234px;font-size:12px;line-height:12px;letter-spacing:-0.250px;">Bygning B</span>
<span class="t" style="left:126.50px;top:234px;font-size:12px;line-height:12px;letter-spacing:-0.558px;">2. sal</span>
<span class="t" style="left:211.30px;top:234px;font-size:12px;line-height:12px;letter-spacing:-0.046px;">Nedrivning af skillevægge</span>
<span class="t" style="left:465.80px;top:234px;font-size:12px;line-height:12px;color:#9ca3af;">-</span>
<span class="t" style="left:568.09px;top:234px;font-size:12px;line-height:12px;letter-spacing:-0.422px;">19. jan.</span>
<span class="t" style="left:650.20px;top:234px;font-size:12px;line-height:12px;letter-spacing:-0.337px;">10. mar.</span>
<span class="t" style="left:714.70px;top:234px;font-size:12px;line-height:12px;font-weight:700;color:#1e40af;letter-spacing:-1.016px;">T1</span>
<span class="t" style="left:776.82px;top:234px;font-size:12px;line-height:12px;">2</span>
<span class="t" style="left:839.35px;top:234px;font-size:12px;line-height:12px;letter-spacing:-0.841px;">94%</span>
<span class="t" style="left:897.78px;top:234px;font-size:12px;line-height:12px;letter-spacing:-0.584px;">6.8</span>
<span class="t" style="left:932.94px;top:234px;font-size:12px;line-height:12px;letter-spacing:-0.584px;">0.4</span>
<span class="t" style="left:997.12px;top:234px;font-size:12px;line-height:12px;font-weight:700;">1</span>
<span class="t" style="left:25.40px;top:266px;font-size:12px;line-height:12px;letter-spacing:-0.250px;">Bygning B</span>
<span class="t" style="left:126.50px;top:266px;font-size:12px;line-height:12px;letter-spacing:-0.558px;">2. sal</span>
<span class="t" style="left:211.30px;top:266px;font-size:12px;line-height:12px;letter-spacing:0.024px;">Nedbrydning af bærende elementer</span>
<span class="t" style="left:458.80px;top:266px;font-size:12px;line-height:12px;color:#000;letter-spacing:-0.308px;-webkit-text-stroke:.35px #000;">DIA</span>
<span class="t" style="left:568.09px;top:266px;font-size:12px;line-height:12px;letter-spacing:-0.422px;">19. jan.</span>
<span class="t" style="left:650.20px;top:266px;font-size:12px;line-height:12px;letter-spacing:-0.337px;">10. mar.</span>
<span class="t" style="left:714.70px;top:266px;font-size:12px;line-height:12px;font-weight:700;color:#1e40af;letter-spacing:-1.016px;">T1</span>
<span class="t" style="left:776.82px;top:266px;font-size:12px;line-height:12px;">2</span>
<span class="t" style="left:839.35px;top:266px;font-size:12px;line-height:12px;letter-spacing:-0.841px;">59%</span>
<span class="t" style="left:891.58px;top:266px;font-size:12px;line-height:12px;letter-spacing:-0.545px;">61.5</span>
<span class="t" style="left:932.94px;top:266px;font-size:12px;line-height:12px;letter-spacing:-0.584px;">4.0</span>
<span class="t" style="left:997.12px;top:266px;font-size:12px;line-height:12px;font-weight:700;">2</span>
<span class="t" style="left:25.40px;top:298px;font-size:12px;line-height:12px;letter-spacing:-0.068px;">Bygning A</span>
<span class="t" style="left:126.50px;top:298px;font-size:12px;line-height:12px;letter-spacing:-0.558px;">2. sal</span>
<span class="t" style="left:211.30px;top:298px;font-size:12px;line-height:12px;letter-spacing:0.024px;">Nedbrydning af bærende elementer</span>
<span class="t" style="left:458.80px;top:298px;font-size:12px;line-height:12px;color:#000;letter-spacing:-0.308px;-webkit-text-stroke:.35px #000;">DIA</span>
<span class="t" style="left:568.09px;top:298px;font-size:12px;line-height:12px;letter-spacing:-0.422px;">23. jan.</span>
<span class="t" style="left:651.95px;top:298px;font-size:12px;line-height:12px;letter-spacing:-0.362px;">14. feb.</span>
<span class="t" style="left:714.70px;top:298px;font-size:12px;line-height:12px;font-weight:700;color:#1e40af;letter-spacing:-1.016px;">T1</span>
<span class="t" style="left:776.82px;top:298px;font-size:12px;line-height:12px;">2</span>
<span class="t" style="left:839.35px;top:298px;font-size:12px;line-height:12px;letter-spacing:-0.841px;">82%</span>
<span class="t" style="left:891.58px;top:298px;font-size:12px;line-height:12px;letter-spacing:-0.545px;">27.0</span>
<span class="t" style="left:932.94px;top:298px;font-size:12px;line-height:12px;letter-spacing:-0.584px;">1.8</span>
<span class="t" style="left:987.62px;top:298px;font-size:12px;line-height:12px;font-weight:700;">3</span>
<span class="t" style="left:25.40px;top:330px;font-size:12px;line-height:12px;letter-spacing:-0.068px;">Bygning A</span>
<span class="t" style="left:126.50px;top:330px;font-size:12px;line-height:12px;letter-spacing:-0.297px;">Kælder</span>
<span class="t" style="left:211.30px;top:330px;font-size:12px;line-height:12px;letter-spacing:0.033px;">Demontering af inventar</span>
<span class="t" style="left:465.80px;top:330px;font-size:12px;line-height:12px;color:#9ca3af;">-</span>
<span class="t" style="left:568.09px;top:330px;font-size:12px;line-height:12px;letter-spacing:-0.422px;">19. jan.</span>
<span class="t" style="left:651.95px;top:330px;font-size:12px;line-height:12px;letter-spacing:-0.362px;">14. feb.</span>
<span class="t" style="left:714.70px;top:330px;font-size:12px;line-height:12px;font-weight:700;color:#047857;letter-spacing:-1.016px;">T2</span>
<span class="t" style="left:776.82px;top:330px;font-size:12px;line-height:12px;">1</span>
<span class="t" style="left:839.35px;top:330px;font-size:12px;line-height:12px;letter-spacing:-0.841px;">80%</span>
<span class="t" style="left:891.58px;top:330px;font-size:12px;line-height:12px;letter-spacing:-0.545px;">16.0</span>
<span class="t" style="left:932.94px;top:330px;font-size:12px;line-height:12px;letter-spacing:-0.584px;">2.1</span>
<span class="t" style="left:987.62px;top:330px;font-size:12px;line-height:12px;font-weight:700;">4</span>
<span class="t" style="left:25.40px;top:362px;font-size:12px;line-height:12px;letter-spacing:-0.068px;">Bygning A</span>
<span class="t" style="left:126.50px;top:362px;font-size:12px;line-height:12px;letter-spacing:-0.297px;">Kælder</span>
<span class="t" style="left:211.30px;top:362px;font-size:12px;line-height:12px;letter-spacing:-0.046px;">Nedrivning af skillevægge</span>
<span class="t" style="left:465.80px;top:362px;font-size:12px;line-height:12px;color:#9ca3af;">-</span>
<span class="t" style="left:568.09px;top:362px;font-size:12px;line-height:12px;letter-spacing:-0.422px;">19. jan.</span>
<span class="t" style="left:651.95px;top:362px;font-size:12px;line-height:12px;letter-spacing:-0.362px;">14. feb.</span>
<span class="t" style="left:714.70px;top:362px;font-size:12px;line-height:12px;font-weight:700;color:#b45309;letter-spacing:-1.016px;">T3</span>
<span class="t" style="left:776.82px;top:362px;font-size:12px;line-height:12px;">1</span>
<span class="t" style="left:839.35px;top:362px;font-size:12px;line-height:12px;letter-spacing:-0.841px;">79%</span>
<span class="t" style="left:891.58px;top:362px;font-size:12px;line-height:12px;letter-spacing:-0.545px;">20.0</span>
<span class="t" style="left:932.94px;top:362px;font-size:12px;line-height:12px;letter-spacing:-0.584px;">2.6</span>
<span class="t" style="left:987.62px;top:362px;font-size:12px;line-height:12px;font-weight:700;">5</span>
<span class="t" style="left:25.40px;top:394px;font-size:12px;line-height:12px;letter-spacing:-0.068px;">Bygning A</span>
<span class="t" style="left:126.50px;top:394px;font-size:12px;line-height:12px;letter-spacing:-0.297px;">Kælder</span>
<span class="t" style="left:211.30px;top:394px;font-size:12px;line-height:12px;letter-spacing:-0.100px;">Fjernelse af installationer</span>
<span class="t" style="left:465.80px;top:394px;font-size:12px;line-height:12px;color:#9ca3af;">-</span>
<span class="t" style="left:568.09px;top:394px;font-size:12px;line-height:12px;letter-spacing:-0.422px;">19. jan.</span>
<span class="t" style="left:651.95px;top:394px;font-size:12px;line-height:12px;letter-spacing:-0.362px;">14. feb.</span>
<span class="t" style="left:714.70px;top:394px;font-size:12px;line-height:12px;font-weight:700;color:#6d28d9;letter-spacing:-1.016px;">T4</span>
<span class="t" style="left:776.82px;top:394px;font-size:12px;line-height:12px;">1</span>
<span class="t" style="left:839.35px;top:394px;font-size:12px;line-height:12px;letter-spacing:-0.841px;">78%</span>
<span class="t" style="left:891.58px;top:394px;font-size:12px;line-height:12px;letter-spacing:-0.545px;">22.0</span>
<span class="t" style="left:932.94px;top:394px;font-size:12px;line-height:12px;letter-spacing:-0.584px;">2.9</span>
<span class="t" style="left:987.62px;top:394px;font-size:12px;line-height:12px;font-weight:700;">6</span>
<span class="t" style="left:25.40px;top:426px;font-size:12px;line-height:12px;letter-spacing:-0.068px;">Bygning A</span>
<span class="t" style="left:126.50px;top:426px;font-size:12px;line-height:12px;letter-spacing:-0.297px;">Kælder</span>
<span class="t" style="left:211.30px;top:426px;font-size:12px;line-height:12px;letter-spacing:0.024px;">Nedbrydning af bærende elementer</span>
<span class="t" style="left:458.80px;top:426px;font-size:12px;line-height:12px;color:#000;letter-spacing:-0.308px;-webkit-text-stroke:.35px #000;">DIA</span>
<span class="t" style="left:568.09px;top:426px;font-size:12px;line-height:12px;letter-spacing:-0.422px;">27. jan.</span>
<span class="t" style="left:651.95px;top:426px;font-size:12px;line-height:12px;letter-spacing:-0.362px;">14. feb.</span>
<span class="t" style="left:714.70px;top:426px;font-size:12px;line-height:12px;font-weight:700;color:#1e40af;letter-spacing:-1.016px;">T1</span>
<span class="t" style="left:776.82px;top:426px;font-size:12px;line-height:12px;">2</span>
<span class="t" style="left:839.35px;top:426px;font-size:12px;line-height:12px;letter-spacing:-0.841px;">80%</span>
<span class="t" style="left:891.58px;top:426px;font-size:12px;line-height:12px;letter-spacing:-0.545px;">30.0</span>
<span class="t" style="left:932.94px;top:426px;font-size:12px;line-height:12px;letter-spacing:-0.584px;">2.0</span>
<span class="t" style="left:987.62px;top:426px;font-size:12px;line-height:12px;font-weight:700;">7</span>
<span class="t" style="left:25.40px;top:458px;font-size:12px;line-height:12px;letter-spacing:-0.068px;">Bygning A</span>
<span class="t" style="left:126.50px;top:458px;font-size:12px;line-height:12px;letter-spacing:-0.297px;">Kælder</span>
<span class="t" style="left:211.30px;top:458px;font-size:12px;line-height:12px;letter-spacing:0.080px;">Oprydning og bortkørsel</span>
<span class="t" style="left:457.35px;top:458px;font-size:12px;line-height:12px;color:#000;letter-spacing:-1.186px;-webkit-text-stroke:.35px #000;">GAF</span>
<span class="t" style="left:568.09px;top:458px;font-size:12px;line-height:12px;letter-spacing:-0.422px;">21. jan.</span>
<span class="t" style="left:651.95px;top:458px;font-size:12px;line-height:12px;letter-spacing:-0.362px;">14. feb.</span>
<span class="t" style="left:714.70px;top:458px;font-size:12px;line-height:12px;font-weight:700;color:#047857;letter-spacing:-1.016px;">T2</span>
<span class="t" style="left:776.82px;top:458px;font-size:12px;line-height:12px;">1</span>
<span class="t" style="left:839.35px;top:458px;font-size:12px;line-height:12px;letter-spacing:-0.841px;">82%</span>
<span class="t" style="left:891.58px;top:458px;font-size:12px;line-height:12px;letter-spacing:-0.545px;">10.8</span>
<span class="t" style="left:932.94px;top:458px;font-size:12px;line-height:12px;letter-spacing:-0.584px;">1.4</span>
<span class="t" style="left:987.62px;top:458px;font-size:12px;line-height:12px;font-weight:700;">8</span>
<span class="t" style="left:25.40px;top:490px;font-size:12px;line-height:12px;letter-spacing:-0.250px;">Bygning B</span>
<span class="t" style="left:126.50px;top:490px;font-size:12px;line-height:12px;letter-spacing:-0.558px;">2. sal</span>
<span class="t" style="left:211.30px;top:490px;font-size:12px;line-height:12px;letter-spacing:0.033px;">Demontering af inventar</span>
<span class="t" style="left:465.80px;top:490px;font-size:12px;line-height:12px;color:#9ca3af;">-</span>
<span class="t" style="left:568.09px;top:490px;font-size:12px;line-height:12px;letter-spacing:-0.422px;">21. jan.</span>
<span class="t" style="left:650.20px;top:490px;font-size:12px;line-height:12px;letter-spacing:-0.337px;">10. mar.</span>
<span class="t" style="left:714.70px;top:490px;font-size:12px;line-height:12px;font-weight:700;color:#b45309;letter-spacing:-1.016px;">T3</span>
<span class="t" style="left:776.82px;top:490px;font-size:12px;line-height:12px;">1</span>
<span class="t" style="left:839.35px;top:490px;font-size:12px;line-height:12px;letter-spacing:-0.841px;">57%</span>
<span class="t" style="left:891.58px;top:490px;font-size:12px;line-height:12px;letter-spacing:-0.545px;">34.5</span>
<span class="t" style="left:932.94px;top:490px;font-size:12px;line-height:12px;letter-spacing:-0.584px;">4.5</span>
<span class="t" style="left:987.62px;top:490px;font-size:12px;line-height:12px;font-weight:700;">9</span>
<span class="t" style="left:25.40px;top:522px;font-size:12px;line-height:12px;letter-spacing:-0.250px;">Bygning B</span>
<span class="t" style="left:126.50px;top:522px;font-size:12px;line-height:12px;letter-spacing:-0.558px;">2. sal</span>
<span class="t" style="left:211.30px;top:522px;font-size:12px;line-height:12px;letter-spacing:-0.100px;">Fjernelse af installationer</span>
<span class="t" style="left:465.80px;top:522px;font-size:12px;line-height:12px;color:#9ca3af;">-</span>
<span class="t" style="left:568.09px;top:522px;font-size:12px;line-height:12px;letter-spacing:-0.422px;">21. jan.</span>
<span class="t" style="left:650.20px;top:522px;font-size:12px;line-height:12px;letter-spacing:-0.337px;">10. mar.</span>
<span class="t" style="left:714.70px;top:522px;font-size:12px;line-height:12px;font-weight:700;color:#6d28d9;letter-spacing:-1.016px;">T4</span>
<span class="t" style="left:776.82px;top:522px;font-size:12px;line-height:12px;">1</span>
<span class="t" style="left:839.35px;top:522px;font-size:12px;line-height:12px;letter-spacing:-0.841px;">65%</span>
<span class="t" style="left:891.58px;top:522px;font-size:12px;line-height:12px;letter-spacing:-0.545px;">35.0</span>
<span class="t" style="left:932.94px;top:522px;font-size:12px;line-height:12px;letter-spacing:-0.584px;">4.6</span>
<span class="t" style="left:984.45px;top:522px;font-size:12px;line-height:12px;font-weight:700;letter-spacing:-0.668px;">10</span>
<span class="t" style="left:25.40px;top:554px;font-size:12px;line-height:12px;letter-spacing:-0.250px;">Bygning B</span>
<span class="t" style="left:126.50px;top:554px;font-size:12px;line-height:12px;letter-spacing:-0.558px;">1. sal</span>
<span class="t" style="left:211.30px;top:554px;font-size:12px;line-height:12px;letter-spacing:0.033px;">Demontering af inventar</span>
<span class="t" style="left:465.80px;top:554px;font-size:12px;line-height:12px;color:#9ca3af;">-</span>
<span class="t" style="left:568.09px;top:554px;font-size:12px;line-height:12px;letter-spacing:-0.422px;">22. jan.</span>
<span class="t" style="left:650.20px;top:554px;font-size:12px;line-height:12px;letter-spacing:-0.337px;">10. mar.</span>
<span class="t" style="left:714.70px;top:554px;font-size:12px;line-height:12px;font-weight:700;color:#047857;letter-spacing:-1.016px;">T2</span>
<span class="t" style="left:776.82px;top:554px;font-size:12px;line-height:12px;">1</span>
<span class="t" style="left:839.35px;top:554px;font-size:12px;line-height:12px;letter-spacing:-0.841px;">63%</span>
<span class="t" style="left:891.58px;top:554px;font-size:12px;line-height:12px;letter-spacing:-0.545px;">29.5</span>
<span class="t" style="left:932.94px;top:554px;font-size:12px;line-height:12px;letter-spacing:-0.584px;">3.9</span>
<span class="t" style="left:984.77px;top:554px;font-size:12px;line-height:12px;font-weight:700;letter-spacing:-0.634px;">11</span>
<span class="t" style="left:25.40px;top:586px;font-size:12px;line-height:12px;letter-spacing:-0.250px;">Bygning B</span>
<span class="t" style="left:126.50px;top:586px;font-size:12px;line-height:12px;letter-spacing:-0.558px;">1. sal</span>
<span class="t" style="left:211.30px;top:586px;font-size:12px;line-height:12px;letter-spacing:-0.046px;">Nedrivning af skillevægge</span>
<span class="t" style="left:465.80px;top:586px;font-size:12px;line-height:12px;color:#9ca3af;">-</span>
<span class="t" style="left:568.09px;top:586px;font-size:12px;line-height:12px;letter-spacing:-0.422px;">28. jan.</span>
<span class="t" style="left:650.20px;top:586px;font-size:12px;line-height:12px;letter-spacing:-0.337px;">10. mar.</span>
<span class="t" style="left:714.70px;top:586px;font-size:12px;line-height:12px;font-weight:700;color:#b45309;letter-spacing:-1.016px;">T3</span>
<span class="t" style="left:776.82px;top:586px;font-size:12px;line-height:12px;">1</span>
<span class="t" style="left:839.35px;top:586px;font-size:12px;line-height:12px;letter-spacing:-0.841px;">61%</span>
<span class="t" style="left:891.58px;top:586px;font-size:12px;line-height:12px;letter-spacing:-0.545px;">42.5</span>
<span class="t" style="left:932.94px;top:586px;font-size:12px;line-height:12px;letter-spacing:-0.584px;">5.6</span>
<span class="t" style="left:984.45px;top:586px;font-size:12px;line-height:12px;font-weight:700;letter-spacing:-0.668px;">12</span>
<span class="t" style="left:25.40px;top:618px;font-size:12px;line-height:12px;letter-spacing:-0.250px;">Bygning B</span>
<span class="t" style="left:126.50px;top:618px;font-size:12px;line-height:12px;letter-spacing:-0.558px;">1. sal</span>
<span class="t" style="left:211.30px;top:618px;font-size:12px;line-height:12px;letter-spacing:-0.100px;">Fjernelse af installationer</span>
<span class="t" style="left:465.80px;top:618px;font-size:12px;line-height:12px;color:#9ca3af;">-</span>
<span class="t" style="left:568.09px;top:618px;font-size:12px;line-height:12px;letter-spacing:-0.422px;">28. jan.</span>
<span class="t" style="left:650.20px;top:618px;font-size:12px;line-height:12px;letter-spacing:-0.337px;">10. mar.</span>
<span class="t" style="left:714.70px;top:618px;font-size:12px;line-height:12px;font-weight:700;color:#047857;letter-spacing:-1.016px;">T2</span>
<span class="t" style="left:776.82px;top:618px;font-size:12px;line-height:12px;">1</span>
<span class="t" style="left:839.35px;top:618px;font-size:12px;line-height:12px;letter-spacing:-0.841px;">71%</span>
<span class="t" style="left:891.58px;top:618px;font-size:12px;line-height:12px;letter-spacing:-0.545px;">29.0</span>
<span class="t" style="left:932.94px;top:618px;font-size:12px;line-height:12px;letter-spacing:-0.584px;">3.8</span>
<span class="t" style="left:984.45px;top:618px;font-size:12px;line-height:12px;font-weight:700;letter-spacing:-0.668px;">13</span>
<span class="t" style="left:25.40px;top:650px;font-size:12px;line-height:12px;letter-spacing:-0.250px;">Bygning B</span>
<span class="t" style="left:126.50px;top:650px;font-size:12px;line-height:12px;letter-spacing:-0.558px;">1. sal</span>
<span class="t" style="left:211.30px;top:650px;font-size:12px;line-height:12px;letter-spacing:0.024px;">Nedbrydning af bærende elementer</span>
<span class="t" style="left:458.80px;top:650px;font-size:12px;line-height:12px;color:#000;letter-spacing:-0.308px;-webkit-text-stroke:.35px #000;">DIA</span>
<span class="t" style="left:568.09px;top:650px;font-size:12px;line-height:12px;letter-spacing:-0.422px;">29. jan.</span>
<span class="t" style="left:650.20px;top:650px;font-size:12px;line-height:12px;letter-spacing:-0.337px;">10. mar.</span>
<span class="t" style="left:714.70px;top:650px;font-size:12px;line-height:12px;font-weight:700;color:#1e40af;letter-spacing:-1.016px;">T1</span>
<span class="t" style="left:776.82px;top:650px;font-size:12px;line-height:12px;">2</span>
<span class="t" style="left:839.35px;top:650px;font-size:12px;line-height:12px;letter-spacing:-0.841px;">70%</span>
<span class="t" style="left:891.58px;top:650px;font-size:12px;line-height:12px;letter-spacing:-0.545px;">40.8</span>
<span class="t" style="left:932.94px;top:650px;font-size:12px;line-height:12px;letter-spacing:-0.584px;">2.7</span>
<span class="t" style="left:984.45px;top:650px;font-size:12px;line-height:12px;font-weight:700;letter-spacing:-0.668px;">14</span>
<span class="t" style="left:25.40px;top:682px;font-size:12px;line-height:12px;letter-spacing:-0.250px;">Bygning B</span>
<span class="t" style="left:126.50px;top:682px;font-size:12px;line-height:12px;letter-spacing:-0.558px;">1. sal</span>
<span class="t" style="left:211.30px;top:682px;font-size:12px;line-height:12px;letter-spacing:0.080px;">Oprydning og bortkørsel</span>
<span class="t" style="left:457.35px;top:682px;font-size:12px;line-height:12px;color:#000;letter-spacing:-1.186px;-webkit-text-stroke:.35px #000;">GAF</span>
<span class="t" style="left:568.09px;top:682px;font-size:12px;line-height:12px;letter-spacing:-0.422px;">28. jan.</span>
<span class="t" style="left:650.20px;top:682px;font-size:12px;line-height:12px;letter-spacing:-0.337px;">10. mar.</span>
<span class="t" style="left:714.70px;top:682px;font-size:12px;line-height:12px;font-weight:700;color:#6d28d9;letter-spacing:-1.016px;">T4</span>
<span class="t" style="left:776.82px;top:682px;font-size:12px;line-height:12px;">1</span>
<span class="t" style="left:839.35px;top:682px;font-size:12px;line-height:12px;letter-spacing:-0.841px;">69%</span>
<span class="t" style="left:891.58px;top:682px;font-size:12px;line-height:12px;letter-spacing:-0.545px;">18.5</span>
<span class="t" style="left:932.94px;top:682px;font-size:12px;line-height:12px;letter-spacing:-0.584px;">2.4</span>
<span class="t" style="left:984.45px;top:682px;font-size:12px;line-height:12px;font-weight:700;letter-spacing:-0.668px;">15</span>
<span class="t" style="left:25.40px;top:714px;font-size:12px;line-height:12px;letter-spacing:-0.250px;">Bygning B</span>
<span class="t" style="left:126.50px;top:714px;font-size:12px;line-height:12px;letter-spacing:-0.125px;">Stueplan</span>
<span class="t" style="left:211.30px;top:714px;font-size:12px;line-height:12px;letter-spacing:0.033px;">Demontering af inventar</span>
<span class="t" style="left:465.80px;top:714px;font-size:12px;line-height:12px;color:#9ca3af;">-</span>
<span class="t" style="left:570.87px;top:714px;font-size:12px;line-height:12px;letter-spacing:-0.417px;">2. feb.</span>
<span class="t" style="left:650.20px;top:714px;font-size:12px;line-height:12px;letter-spacing:-0.337px;">10. mar.</span>
<span class="t" style="left:714.70px;top:714px;font-size:12px;line-height:12px;font-weight:700;color:#6d28d9;letter-spacing:-1.016px;">T4</span>
<span class="t" style="left:776.82px;top:714px;font-size:12px;line-height:12px;">1</span>
<span class="t" style="left:839.35px;top:714px;font-size:12px;line-height:12px;letter-spacing:-0.841px;">67%</span>
<span class="t" style="left:891.58px;top:714px;font-size:12px;line-height:12px;letter-spacing:-0.545px;">22.5</span>
<span class="t" style="left:932.94px;top:714px;font-size:12px;line-height:12px;letter-spacing:-0.584px;">3.0</span>
<span class="t" style="left:984.45px;top:714px;font-size:12px;line-height:12px;font-weight:700;letter-spacing:-0.668px;">16</span>
<span class="t" style="left:25.40px;top:746px;font-size:12px;line-height:12px;letter-spacing:-0.250px;">Bygning B</span>
<span class="t" style="left:126.50px;top:746px;font-size:12px;line-height:12px;letter-spacing:-0.125px;">Stueplan</span>
<span class="t" style="left:211.30px;top:746px;font-size:12px;line-height:12px;letter-spacing:-0.046px;">Nedrivning af skillevægge</span>
<span class="t" style="left:465.80px;top:746px;font-size:12px;line-height:12px;color:#9ca3af;">-</span>
<span class="t" style="left:570.87px;top:746px;font-size:12px;line-height:12px;letter-spacing:-0.417px;">3. feb.</span>
<span class="t" style="left:650.20px;top:746px;font-size:12px;line-height:12px;letter-spacing:-0.337px;">10. mar.</span>
<span class="t" style="left:714.70px;top:746px;font-size:12px;line-height:12px;font-weight:700;color:#1e40af;letter-spacing:-1.016px;">T1</span>
<span class="t" style="left:776.82px;top:746px;font-size:12px;line-height:12px;">2</span>
<span class="t" style="left:839.35px;top:746px;font-size:12px;line-height:12px;letter-spacing:-0.841px;">67%</span>
<span class="t" style="left:891.58px;top:746px;font-size:12px;line-height:12px;letter-spacing:-0.545px;">39.5</span>
<span class="t" style="left:932.94px;top:746px;font-size:12px;line-height:12px;letter-spacing:-0.584px;">2.6</span>
<span class="t" style="left:984.45px;top:746px;font-size:12px;line-height:12px;font-weight:700;letter-spacing:-0.668px;">17</span>
<span class="t" style="left:25.40px;top:778px;font-size:12px;line-height:12px;letter-spacing:-0.250px;">Bygning B</span>
<span class="t" style="left:126.50px;top:778px;font-size:12px;line-height:12px;letter-spacing:-0.125px;">Stueplan</span>
<span class="t" style="left:211.30px;top:778px;font-size:12px;line-height:12px;letter-spacing:-0.100px;">Fjernelse af installationer</span>
<span class="t" style="left:465.80px;top:778px;font-size:12px;line-height:12px;color:#9ca3af;">-</span>
<span class="t" style="left:570.87px;top:778px;font-size:12px;line-height:12px;letter-spacing:-0.417px;">3. feb.</span>
<span class="t" style="left:650.20px;top:778px;font-size:12px;line-height:12px;letter-spacing:-0.337px;">10. mar.</span>
<span class="t" style="left:714.70px;top:778px;font-size:12px;line-height:12px;font-weight:700;color:#047857;letter-spacing:-1.016px;">T2</span>
<span class="t" style="left:776.82px;top:778px;font-size:12px;line-height:12px;">1</span>
<span class="t" style="left:839.35px;top:778px;font-size:12px;line-height:12px;letter-spacing:-0.841px;">73%</span>
<span class="t" style="left:891.58px;top:778px;font-size:12px;line-height:12px;letter-spacing:-0.545px;">27.0</span>
<span class="t" style="left:932.94px;top:778px;font-size:12px;line-height:12px;letter-spacing:-0.584px;">3.5</span>
<span class="t" style="left:984.45px;top:778px;font-size:12px;line-height:12px;font-weight:700;letter-spacing:-0.668px;">18</span>
<span class="t" style="left:25.40px;top:810px;font-size:12px;line-height:12px;letter-spacing:-0.250px;">Bygning B</span>
<span class="t" style="left:126.50px;top:810px;font-size:12px;line-height:12px;letter-spacing:-0.125px;">Stueplan</span>
<span class="t" style="left:211.30px;top:810px;font-size:12px;line-height:12px;letter-spacing:0.024px;">Nedbrydning af bærende elementer</span>
<span class="t" style="left:458.80px;top:810px;font-size:12px;line-height:12px;color:#000;letter-spacing:-0.308px;-webkit-text-stroke:.35px #000;">DIA</span>
<span class="t" style="left:570.87px;top:810px;font-size:12px;line-height:12px;letter-spacing:-0.417px;">4. feb.</span>
<span class="t" style="left:650.20px;top:810px;font-size:12px;line-height:12px;letter-spacing:-0.337px;">10. mar.</span>
<span class="t" style="left:714.70px;top:810px;font-size:12px;line-height:12px;font-weight:700;color:#b45309;letter-spacing:-1.016px;">T3</span>
<span class="t" style="left:776.82px;top:810px;font-size:12px;line-height:12px;">1</span>
<span class="t" style="left:839.35px;top:810px;font-size:12px;line-height:12px;letter-spacing:-0.841px;">70%</span>
<span class="t" style="left:891.58px;top:810px;font-size:12px;line-height:12px;letter-spacing:-0.545px;">40.8</span>
<span class="t" style="left:932.94px;top:810px;font-size:12px;line-height:12px;letter-spacing:-0.584px;">5.3</span>
<span class="t" style="left:984.45px;top:810px;font-size:12px;line-height:12px;font-weight:700;letter-spacing:-0.668px;">19</span>
<span class="t" style="left:25.40px;top:842px;font-size:12px;line-height:12px;letter-spacing:-0.250px;">Bygning B</span>
<span class="t" style="left:126.50px;top:842px;font-size:12px;line-height:12px;letter-spacing:-0.125px;">Stueplan</span>
<span class="t" style="left:211.30px;top:842px;font-size:12px;line-height:12px;letter-spacing:0.080px;">Oprydning og bortkørsel</span>
<span class="t" style="left:457.35px;top:842px;font-size:12px;line-height:12px;color:#000;letter-spacing:-1.186px;-webkit-text-stroke:.35px #000;">GAF</span>
<span class="t" style="left:570.87px;top:842px;font-size:12px;line-height:12px;letter-spacing:-0.417px;">5. feb.</span>
<span class="t" style="left:650.20px;top:842px;font-size:12px;line-height:12px;letter-spacing:-0.337px;">10. mar.</span>
<span class="t" style="left:714.70px;top:842px;font-size:12px;line-height:12px;font-weight:700;color:#6d28d9;letter-spacing:-1.016px;">T4</span>
<span class="t" style="left:776.82px;top:842px;font-size:12px;line-height:12px;">1</span>
<span class="t" style="left:839.35px;top:842px;font-size:12px;line-height:12px;letter-spacing:-0.841px;">73%</span>
<span class="t" style="left:891.58px;top:842px;font-size:12px;line-height:12px;letter-spacing:-0.545px;">15.0</span>
<span class="t" style="left:932.94px;top:842px;font-size:12px;line-height:12px;letter-spacing:-0.584px;">2.0</span>
<span class="t" style="left:984.45px;top:842px;font-size:12px;line-height:12px;font-weight:700;letter-spacing:-0.668px;">20</span>
<span class="t" style="left:1104.25px;top:235px;font-size:10px;line-height:10px;font-weight:700;color:#fff;letter-spacing:-0.172px;">T1</span>
<span class="t" style="left:1116.25px;top:267px;font-size:10px;line-height:10px;font-weight:700;color:#fff;letter-spacing:-0.172px;">T1</span>
<span class="t" style="left:1224.25px;top:299px;font-size:10px;line-height:10px;font-weight:700;color:#fff;letter-spacing:-0.172px;">T1</span>
<span class="t" style="left:1104.25px;top:331px;font-size:10px;line-height:10px;font-weight:700;color:#fff;letter-spacing:-0.172px;">T2</span>
<span class="t" style="left:1104.25px;top:363px;font-size:10px;line-height:10px;font-weight:700;color:#fff;letter-spacing:-0.172px;">T3</span>
<span class="t" style="left:1104.25px;top:395px;font-size:10px;line-height:10px;font-weight:700;color:#fff;letter-spacing:-0.172px;">T4</span>
<span class="t" style="left:1325.25px;top:427px;font-size:10px;line-height:10px;font-weight:700;color:#fff;letter-spacing:-0.172px;">T1</span>
<span class="t" style="left:1161.25px;top:459px;font-size:10px;line-height:10px;font-weight:700;color:#fff;letter-spacing:-0.172px;">T2</span>
<span class="t" style="left:1174.25px;top:491px;font-size:10px;line-height:10px;font-weight:700;color:#fff;letter-spacing:-0.172px;">T3</span>
<span class="t" style="left:1181.25px;top:523px;font-size:10px;line-height:10px;font-weight:700;color:#fff;letter-spacing:-0.172px;">T4</span>
<span class="t" style="left:1198.25px;top:555px;font-size:10px;line-height:10px;font-weight:700;color:#fff;letter-spacing:-0.172px;">T2</span>
<span class="t" style="left:1349.25px;top:587px;font-size:10px;line-height:10px;font-weight:700;color:#fff;letter-spacing:-0.172px;">T3</span>
<span class="t" style="left:1355.25px;top:619px;font-size:10px;line-height:10px;font-weight:700;color:#fff;letter-spacing:-0.172px;">T2</span>
<span class="t" style="left:1378.25px;top:651px;font-size:10px;line-height:10px;font-weight:700;color:#fff;letter-spacing:-0.172px;">T1</span>
<span class="t" style="left:1357.25px;top:683px;font-size:10px;line-height:10px;font-weight:700;color:#fff;letter-spacing:-0.172px;">T4</span>
<span class="t" style="left:1476.25px;top:715px;font-size:10px;line-height:10px;font-weight:700;color:#fff;letter-spacing:-0.172px;">T4</span>
<span class="t" style="left:1503.25px;top:747px;font-size:10px;line-height:10px;font-weight:700;color:#fff;letter-spacing:-0.172px;">T1</span>
<span class="t" style="left:1511.25px;top:779px;font-size:10px;line-height:10px;font-weight:700;color:#fff;letter-spacing:-0.172px;">T2</span>
<span class="t" style="left:1551.25px;top:811px;font-size:10px;line-height:10px;font-weight:700;color:#fff;letter-spacing:-0.172px;">T3</span>
<span class="t" style="left:1556.25px;top:843px;font-size:10px;line-height:10px;font-weight:700;color:#fff;letter-spacing:-0.172px;">T4</span>
<span class="t" style="left:1830.91px;top:180px;font-size:14px;line-height:14px;font-weight:700;color:#fff;z-index:6;">+</span>
<span class="t" style="left:1831.66px;top:204px;font-size:12px;line-height:12px;font-weight:700;color:#fff;z-index:6;">–</span>
<span class="t" style="left:1033.09px;top:175px;font-size:12px;line-height:12px;font-weight:700;color:#fff;z-index:6;transform:scaleY(.85);">×</span>
<span class="t" style="left:1218.13px;top:175px;font-size:12px;line-height:12px;font-weight:700;color:#fff;z-index:6;transform:scaleY(.85);">×</span>
<span class="t" style="left:1403.16px;top:175px;font-size:12px;line-height:12px;font-weight:700;color:#fff;z-index:6;transform:scaleY(.85);">×</span>
<span class="t" style="left:1588.19px;top:175px;font-size:12px;line-height:12px;font-weight:700;color:#fff;z-index:6;transform:scaleY(.85);">×</span>
<span class="t" style="left:1773.23px;top:175px;font-size:12px;line-height:12px;font-weight:700;color:#fff;z-index:6;transform:scaleY(.85);">×</span>
<div style="left:1042px;top:223px;width:1px;height:622px;background:rgba(200,203,209,.85)"></div>
<div style="left:1042px;top:174px;width:1px;height:48px;background:#e5e7eb"></div>
<div style="left:1069px;top:223px;width:1px;height:622px;background:rgba(200,203,209,.85)"></div>
<div style="left:1069px;top:174px;width:1px;height:48px;background:#e5e7eb"></div>
<div style="left:1095px;top:223px;width:1px;height:622px;background:rgba(200,203,209,.85)"></div>
<div style="left:1095px;top:174px;width:1px;height:48px;background:#e5e7eb"></div>
<div style="left:1122px;top:223px;width:1px;height:622px;background:rgba(200,203,209,.85)"></div>
<div style="left:1122px;top:174px;width:1px;height:48px;background:#e5e7eb"></div>
<div style="left:1148px;top:223px;width:1px;height:622px;background:rgba(200,203,209,.85)"></div>
<div style="left:1148px;top:174px;width:1px;height:48px;background:#e5e7eb"></div>
<div style="left:1175px;top:223px;width:1px;height:622px;background:rgba(200,203,209,.85)"></div>
<div style="left:1175px;top:174px;width:1px;height:48px;background:#e5e7eb"></div>
<div style="left:1201px;top:223px;width:1px;height:622px;background:rgba(200,203,209,.85)"></div>
<div style="left:1201px;top:174px;width:1px;height:48px;background:#e5e7eb"></div>
<div style="left:1227px;top:223px;width:1px;height:622px;background:rgba(200,203,209,.85)"></div>
<div style="left:1227px;top:174px;width:1px;height:48px;background:#e5e7eb"></div>
<div style="left:1254px;top:223px;width:1px;height:622px;background:rgba(200,203,209,.85)"></div>
<div style="left:1254px;top:174px;width:1px;height:48px;background:#e5e7eb"></div>
<div style="left:1280px;top:223px;width:1px;height:622px;background:rgba(200,203,209,.85)"></div>
<div style="left:1280px;top:174px;width:1px;height:48px;background:#e5e7eb"></div>
<div style="left:1307px;top:223px;width:1px;height:622px;background:rgba(200,203,209,.85)"></div>
<div style="left:1307px;top:174px;width:1px;height:48px;background:#e5e7eb"></div>
<div style="left:1333px;top:223px;width:1px;height:622px;background:rgba(200,203,209,.85)"></div>
<div style="left:1333px;top:174px;width:1px;height:48px;background:#e5e7eb"></div>
<div style="left:1360px;top:223px;width:1px;height:622px;background:rgba(200,203,209,.85)"></div>
<div style="left:1360px;top:174px;width:1px;height:48px;background:#e5e7eb"></div>
<div style="left:1386px;top:223px;width:1px;height:622px;background:rgba(200,203,209,.85)"></div>
<div style="left:1386px;top:174px;width:1px;height:48px;background:#e5e7eb"></div>
<div style="left:1413px;top:223px;width:1px;height:622px;background:rgba(200,203,209,.85)"></div>
<div style="left:1413px;top:174px;width:1px;height:48px;background:#e5e7eb"></div>
<div style="left:1439px;top:223px;width:1px;height:622px;background:rgba(200,203,209,.85)"></div>
<div style="left:1439px;top:174px;width:1px;height:48px;background:#e5e7eb"></div>
<div style="left:1465px;top:223px;width:1px;height:622px;background:rgba(200,203,209,.85)"></div>
<div style="left:1465px;top:174px;width:1px;height:48px;background:#e5e7eb"></div>
<div style="left:1492px;top:223px;width:1px;height:622px;background:rgba(200,203,209,.85)"></div>
<div style="left:1492px;top:174px;width:1px;height:48px;background:#e5e7eb"></div>
<div style="left:1518px;top:223px;width:1px;height:622px;background:rgba(200,203,209,.85)"></div>
<div style="left:1518px;top:174px;width:1px;height:48px;background:#e5e7eb"></div>
<div style="left:1545px;top:223px;width:1px;height:622px;background:rgba(200,203,209,.85)"></div>
<div style="left:1545px;top:174px;width:1px;height:48px;background:#e5e7eb"></div>
<div style="left:1571px;top:223px;width:1px;height:622px;background:rgba(200,203,209,.85)"></div>
<div style="left:1571px;top:174px;width:1px;height:48px;background:#e5e7eb"></div>
<div style="left:1598px;top:223px;width:1px;height:622px;background:rgba(200,203,209,.85)"></div>
<div style="left:1598px;top:174px;width:1px;height:48px;background:#e5e7eb"></div>
<div style="left:1624px;top:223px;width:1px;height:622px;background:rgba(200,203,209,.85)"></div>
<div style="left:1624px;top:174px;width:1px;height:48px;background:#e5e7eb"></div>
<div style="left:1650px;top:223px;width:1px;height:622px;background:rgba(200,203,209,.85)"></div>
<div style="left:1650px;top:174px;width:1px;height:48px;background:#e5e7eb"></div>
<div style="left:1677px;top:223px;width:1px;height:622px;background:rgba(200,203,209,.85)"></div>
<div style="left:1677px;top:174px;width:1px;height:48px;background:#e5e7eb"></div>
<div style="left:1703px;top:223px;width:1px;height:622px;background:rgba(200,203,209,.85)"></div>
<div style="left:1703px;top:174px;width:1px;height:48px;background:#e5e7eb"></div>
<div style="left:1730px;top:223px;width:1px;height:622px;background:rgba(200,203,209,.85)"></div>
<div style="left:1730px;top:174px;width:1px;height:48px;background:#e5e7eb"></div>
<div style="left:1756px;top:223px;width:1px;height:622px;background:rgba(200,203,209,.85)"></div>
<div style="left:1756px;top:174px;width:1px;height:48px;background:#e5e7eb"></div>
<div style="left:1783px;top:223px;width:1px;height:622px;background:rgba(200,203,209,.85)"></div>
<div style="left:1783px;top:174px;width:1px;height:48px;background:#e5e7eb"></div>
<div style="left:1017px;top:254px;width:843px;height:1px;background:rgba(200,203,209,.85)"></div>
<div style="left:1017px;top:286px;width:843px;height:1px;background:rgba(200,203,209,.85)"></div>
<div style="left:1017px;top:318px;width:843px;height:1px;background:rgba(200,203,209,.85)"></div>
<div style="left:1017px;top:350px;width:843px;height:1px;background:rgba(200,203,209,.85)"></div>
<div style="left:1017px;top:382px;width:843px;height:1px;background:rgba(200,203,209,.85)"></div>
<div style="left:1017px;top:414px;width:843px;height:1px;background:rgba(200,203,209,.85)"></div>
<div style="left:1017px;top:446px;width:843px;height:1px;background:rgba(200,203,209,.85)"></div>
<div style="left:1017px;top:478px;width:843px;height:1px;background:rgba(200,203,209,.85)"></div>
<div style="left:1017px;top:510px;width:843px;height:1px;background:rgba(200,203,209,.85)"></div>
<div style="left:1017px;top:542px;width:843px;height:1px;background:rgba(200,203,209,.85)"></div>
<div style="left:1017px;top:574px;width:843px;height:1px;background:rgba(200,203,209,.85)"></div>
<div style="left:1017px;top:606px;width:843px;height:1px;background:rgba(200,203,209,.85)"></div>
<div style="left:1017px;top:638px;width:843px;height:1px;background:rgba(200,203,209,.85)"></div>
<div style="left:1017px;top:670px;width:843px;height:1px;background:rgba(200,203,209,.85)"></div>
<div style="left:1017px;top:702px;width:843px;height:1px;background:rgba(200,203,209,.85)"></div>
<div style="left:1017px;top:734px;width:843px;height:1px;background:rgba(200,203,209,.85)"></div>
<div style="left:1017px;top:766px;width:843px;height:1px;background:rgba(200,203,209,.85)"></div>
<div style="left:1017px;top:798px;width:843px;height:1px;background:rgba(200,203,209,.85)"></div>
<div style="left:1017px;top:830px;width:843px;height:1px;background:rgba(200,203,209,.85)"></div>
<div style="left:1017px;top:862px;width:843px;height:1px;background:rgba(200,203,209,.85)"></div>
<div style="left:1094px;top:223px;width:2px;height:622px;background:#dc3535"></div>
<div style="left:1812px;top:176px;width:46px;height:20px;background:#22c05b;border-radius:4px"></div>
<div style="left:1812px;top:200px;width:46px;height:20px;background:#ef4444;border-radius:4px"></div>
<div style="left:1028.6px;top:172.25px;width:16px;height:16px;border-radius:8px;background:#eab308"></div>
<div style="left:1213.6333333333332px;top:172.25px;width:16px;height:16px;border-radius:8px;background:#9ca3af"></div>
<div style="left:1398.6666666666665px;top:172.25px;width:16px;height:16px;border-radius:8px;background:#9ca3af"></div>
<div style="left:1583.6999999999998px;top:172.25px;width:16px;height:16px;border-radius:8px;background:#9ca3af"></div>
<div style="left:1768.7333333333331px;top:172.25px;width:16px;height:16px;border-radius:8px;background:#9ca3af"></div>
<div style="left:1822px;top:775px;width:52px;height:52px;border-radius:26px;background:#fff;box-shadow:0 2px 8px rgba(0,0,0,.22)"></div>
<svg width="42" height="43" viewBox="0 0 42 43" style="left:1828px;top:779.500px"><defs><clipPath id="avc"><circle cx="21" cy="21.500" r="21"/></clipPath><filter id="avb"><feGaussianBlur stdDeviation=".45"/></filter></defs><g clip-path="url(#avc)" filter="url(#avb)"><rect width="42" height="43" fill="#d9d2cc"/><rect x="0" y="6" width="12" height="24" fill="#6d6660"/><rect x="2" y="10" width="4" height="18" fill="#8d8680"/><rect x="30" y="8" width="12" height="20" fill="#b8a898"/><rect x="36" y="16" width="6" height="6" fill="#e0a040"/><rect x="0" y="28" width="42" height="15" fill="#c9bfb5"/><path d="M12 14c-2 6-1 14 1 18h16c2-4 3-12 1-18Z" fill="#a8794e"/><ellipse cx="21" cy="17" rx="7" ry="8.500" fill="#e3b295"/><path d="M17.500 20.500c2 1.600 5 1.600 7 0" fill="none" stroke="#b5675a" stroke-width=".9"/><path d="M10.500 10.500C11 4 16 1.500 21 1.500s10 2.500 10.500 9c-3-1.500-7-2.200-10.500-2.200s-7.500.7-10.500 2.200Z" fill="#f4f4f2"/><rect x="16" y="2" width="10" height="1.600" fill="#3a3a40"/><path d="M9 11c4-2 8-2.600 12-2.600s8 .6 12 2.600l-.5 1.200c-4-1.500-7.500-2-11.500-2s-7.500.5-11.500 2Z" fill="#e2e2e0"/><path d="M17 25.500 14 28 21 43 28 28 25 25.500c-2.500 1.500-5.500 1.500-8 0Z" fill="#7fa6cf"/><path d="M19 29l2 14 2-14-2-2Z" fill="#6c94c2"/><path d="M14 28 4 32v11h17ZM28 28l10 4v11H21Z" fill="#dfe63a"/><path d="M6 32l3 11h4l-5-12ZM36 32l-3 11h-4l5-12Z" fill="#9ea3a8"/><path d="M4 32 0 35v8h4ZM38 32l4 3v8h-4Z" fill="#7fa6cf"/></g></svg>
</div></body></html>
